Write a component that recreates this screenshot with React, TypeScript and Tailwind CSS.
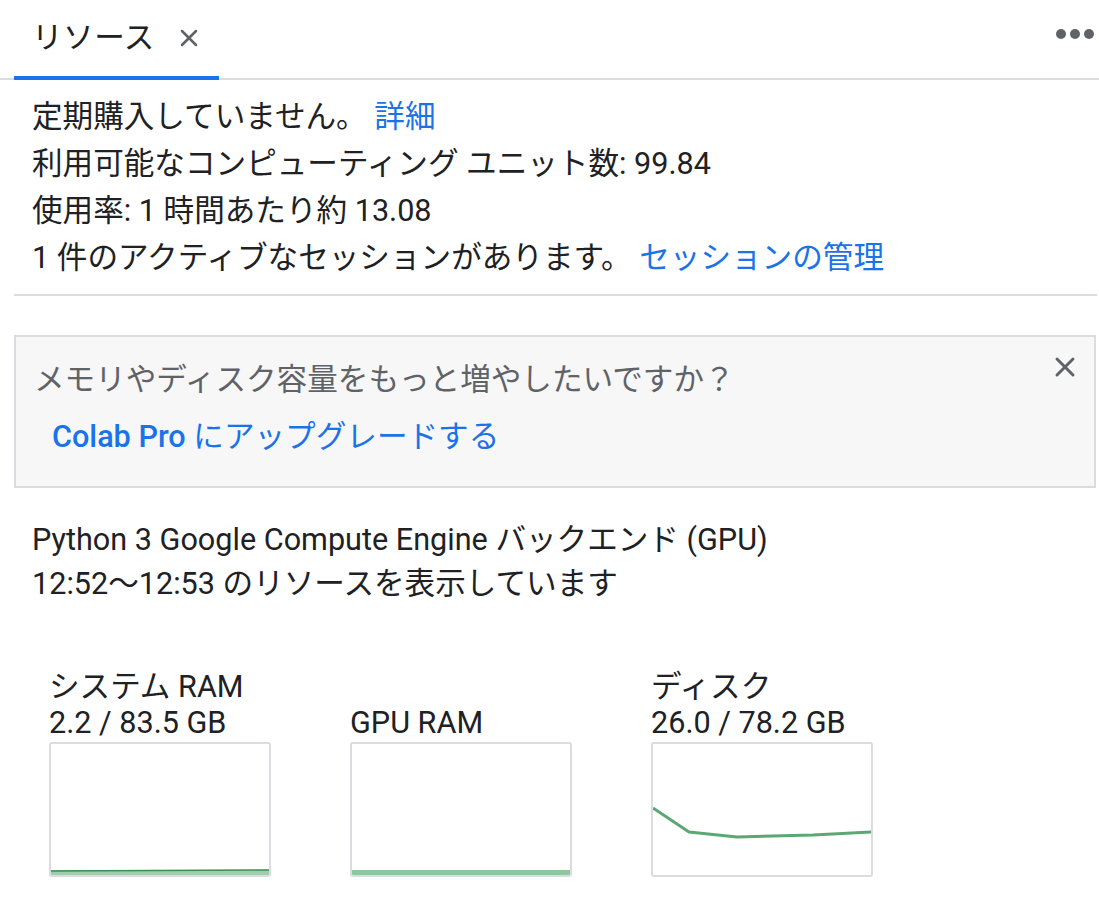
import { X } from "lucide-react";

const font = "font-['Roboto','Noto_Sans_CJK_JP',sans-serif]";

function Chart({ points, flat }: { points?: string; flat?: "thin" | "thick" }) {
  return (
    <div className="w-[222px] h-[135px] border-2 border-[#dadce0] rounded-[3px] bg-white overflow-hidden">
      <svg width="218" height="131" viewBox="0 0 218 131" className="block">
        {points && (
          <polyline
            points={points}
            fill="none"
            stroke="#4a9e63"
            strokeWidth="3"
            strokeLinejoin="round"
            opacity="0.9"
          />
        )}
        {flat === "thin" && (
          <>
            <rect x="0" y="126" width="218" height="5" fill="#9fcfaa" />
            <line x1="0" y1="127" x2="218" y2="126" stroke="#3a8f55" strokeWidth="1.5" />
          </>
        )}
        {flat === "thick" && <rect x="0" y="126" width="218" height="5" fill="#8fc79c" />}
      </svg>
    </div>
  );
}

export default function App() {
  return (
    <div className={`${font} w-[1099px] h-[902px] bg-white text-[#202124] text-[30.6px] overflow-hidden`}>
      {/* Tab bar */}
      <div className="flex items-end justify-between h-[80px] border-b-2 border-[#dadce0]">
        <div className="ml-[14px] w-[205px] h-full flex items-center pl-[18px] gap-[20px] border-b-4 border-[#1a73e8] -mb-[2px]">
          <span className="leading-none -mt-[1px] tracking-[0.5px]">リソース</span>
          <X className="w-[28px] h-[28px] text-[#5f6368] -mt-[2px]" strokeWidth={2.2} />
        </div>
        <div className="self-center flex gap-[4px] mr-[5px] -mt-[10px]">
          <span className="w-[10px] h-[10px] rounded-full bg-[#5f6368]" />
          <span className="w-[10px] h-[10px] rounded-full bg-[#5f6368]" />
          <span className="w-[10px] h-[10px] rounded-full bg-[#5f6368]" />
        </div>
      </div>

      {/* Subscription info */}
      <div className="ml-[14px] mr-[2px] pl-[18px] pt-[13px] pb-[13px] leading-[47px] border-b-2 border-[#dadce0]">
        <div>
          定期購入していません。 <span className="text-[#1a73e8]">詳細</span>
        </div>
        <div>利用可能なコンピューティング ユニット数: 99.84</div>
        <div>使用率: 1 時間あたり約 13.08</div>
        <div>
          1 件のアクティブなセッションがあります。 <span className="text-[#1a73e8]">セッションの管理</span>
        </div>
      </div>

      {/* Upgrade box */}
      <div className="mt-[39px] ml-[14px] mr-[3px] h-[153px] bg-[#f7f7f7] border-2 border-[#dadce0] flex justify-between">
        <div className="pl-[18px] pt-[22px]">
          <div className="text-[#5f6368] leading-[42px]">メモリやディスク容量をもっと増やしたいですか？</div>
          <div className="pl-[18px] mt-[15px] text-[#1a73e8] leading-[42px]">
            <span className="font-medium">Colab Pro</span> にアップグレードする
          </div>
        </div>
        <X className="w-[32px] h-[32px] text-[#5f6368] mt-[14px] mr-[13px]" strokeWidth={2.2} />
      </div>

      {/* Backend */}
      <div className="pl-[32px] pt-[30px] leading-[44px]">
        <div>Python 3 Google Compute Engine バックエンド (GPU)</div>
        <div>12:52～12:53 のリソースを表示しています</div>
      </div>

      {/* Charts */}
      <div className="flex pl-[49px] pt-[63px] gap-[79px] items-end">
        <div>
          <div className="leading-[36px]">システム RAM</div>
          <div className="leading-[36px] mb-[1px]">2.2 / 83.5 GB</div>
          <Chart flat="thin" />
        </div>
        <div>
          <div className="leading-[36px] mb-[1px]">GPU RAM</div>
          <Chart flat="thick" />
        </div>
        <div>
          <div className="leading-[36px]">ディスク</div>
          <div className="leading-[36px] mb-[1px]">26.0 / 78.2 GB</div>
          <Chart points="0,64 36,88 84,93 160,91 218,88" />
        </div>
      </div>
    </div>
  );
}
